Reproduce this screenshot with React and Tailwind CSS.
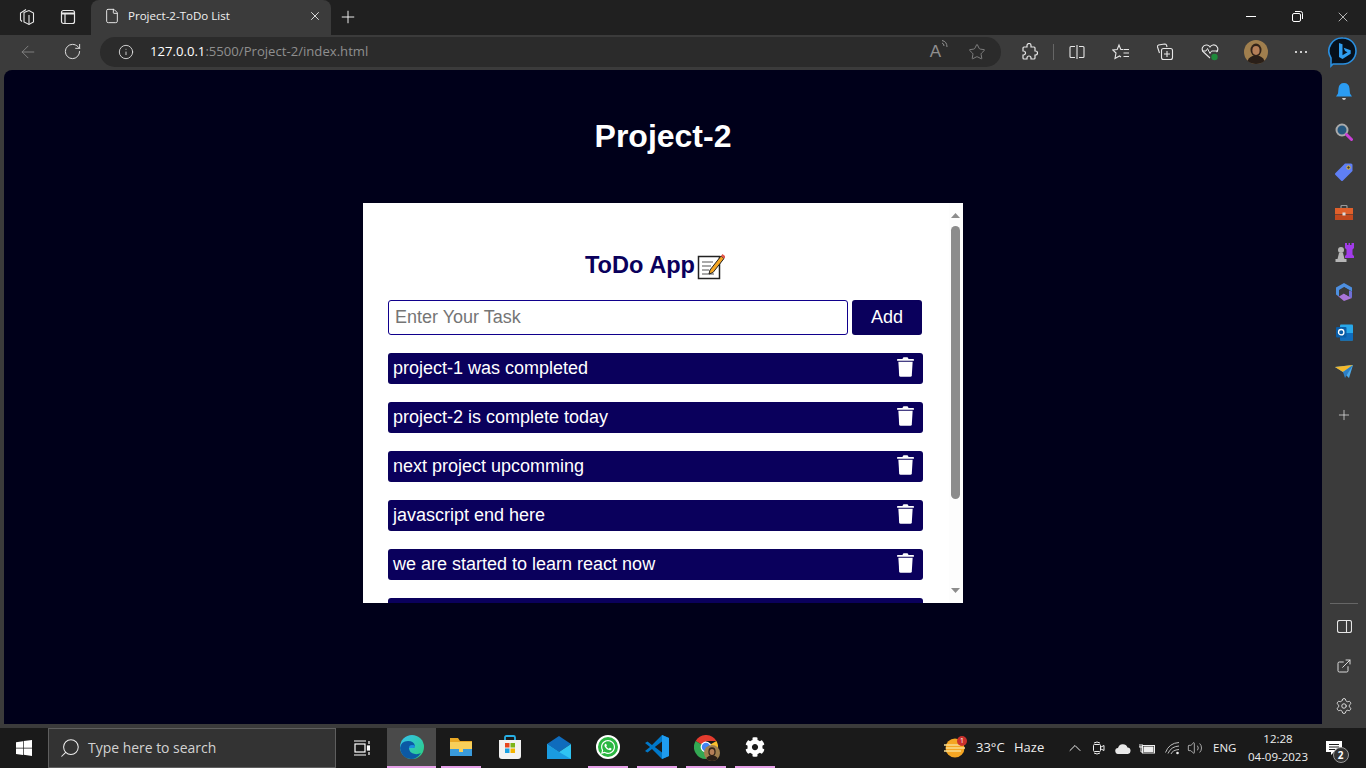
import React from 'react';
import { ArrowLeft, RotateCw, Info, Star, Plus, X, File, ChevronUp, Search, Settings, ExternalLink, Volume2 } from 'lucide-react';
import { FaCog, FaWhatsapp } from 'react-icons/fa';

// the sixth row is cut off by the card, only its top edge shows
const tasks = [
  'project-1 was completed',
  'project-2 is complete today',
  'next project upcomming',
  'javascript end here',
  'we are started to learn react now',
  '',
];

const TrashIcon = () => (
  <svg width="17" height="20" viewBox="0 0 16 19" fill="white" className="mb-[3px]">
    <path d="M5.500 1Q5.700.3 6.500.3h3q.8 0 1 .7l.3.8H15.500q.5 0 .5.5V3.500H0V2.300q0-.5.5-.5h4.700z" />
    <path d="M1.200 4.500h13.600l-.8 13q-.1 1.300-1.400 1.300H3.400q-1.300 0-1.400-1.300z" />
  </svg>
);

const MemoIcon = () => (
  <svg width="28" height="28" viewBox="0 0 28 28">
    <rect x="1.500" y="4.500" width="21" height="22" fill="#fff" stroke="#222" strokeWidth="1.500" />
    <path d="M5 10h11M5 14h9M5 18h7M5 22h12" stroke="#555" strokeWidth="1.200" />
    <path d="M13 18 24 4l3 2.500L16 20.500l-4 1.500z" fill="#f5a623" stroke="#222" strokeWidth="1" />
    <path d="M24 4l1.500-2 3 2.500-1.500 2z" fill="#e2574c" />
  </svg>
);

const Avatar = ({ size = 24 }) => (
  <svg width={size} height={size} viewBox="0 0 24 24">
    <circle cx="12" cy="12" r="12" fill="#a07f4e" />
    <ellipse cx="12" cy="10" rx="5.500" ry="6.500" fill="#33241a" />
    <ellipse cx="12" cy="10.500" rx="3.600" ry="4.400" fill="#b57f58" />
    <path d="M3.500 21q2-5.500 8.500-5.500t8.500 5.500q-3.500 3-8.500 3t-8.500-3z" fill="#2a1f18" />
  </svg>
);

const BingIcon = () => (
  <svg width="30" height="32" viewBox="0 0 30 32">
    <path d="M15 2a13 13 0 0 1 0 26H5l-2 2v-8A13 13 0 0 1 15 2z" fill="#06101c" stroke="#2a8fe0" strokeWidth="1.600" />
    <path d="M11 7l3.500 1.200v11l5-3-2.500-1.200-1.300-3.200 7 2.400v3.600L14.500 23 11 21z" fill="#2f9df0" />
  </svg>
);

const IconBox = ({ w = 'w-[44px]', children }) => (
  <div className={`${w} h-full flex items-center justify-center shrink-0`}>{children}</div>
);

const TabBar = () => (
  <div className="h-[35px] bg-[#202020] flex shrink-0 pb-[2px]">
    <IconBox w="w-[52px]">
      <svg width="18" height="18" viewBox="0 0 18 18" fill="none" stroke="#e8e8e8" strokeWidth="1.100">
        <path d="M7 4.500 12 2.500 16.500 5v9L12 16.500 7 14z" />
        <path d="M5 13.500 3.500 12V5L9 1.500" />
        <path d="M12 7v9.500" />
      </svg>
    </IconBox>
    <IconBox w="w-[32px]">
      <svg width="16" height="16" viewBox="0 0 16 16" fill="none" stroke="#e8e8e8" strokeWidth="1.200">
        <rect x="1.500" y="1.500" width="13" height="13" rx="2" />
        <path d="M1.500 4.500h13" strokeWidth="2" />
        <path d="M5 5v9.500" />
      </svg>
    </IconBox>
    <div className="w-[7px]" />
    <div className="w-[240px] h-[35px] bg-[#3b3b3b] rounded-t-lg flex items-center pl-[13px] pr-[8px] pb-[3px] text-[#f0f0f0]">
      <File size={16} strokeWidth={1.400} />
      <span className="ml-[8px] text-[11.550px] font-['Open_Sans',sans-serif]">Project-2-ToDo List</span>
      <X size={14} strokeWidth={1.500} className="ml-auto mr-[1px]" />
    </div>
    <IconBox w="w-[34px]">
      <Plus size={20} strokeWidth={1.100} color="#ffffff" />
    </IconBox>
    <div className="flex-1" />
    <IconBox w="w-[46px]">
      <div className="w-[10px] h-px bg-white" />
    </IconBox>
    <IconBox w="w-[46px]">
      <svg width="11" height="11" viewBox="0 0 11 11" fill="none" stroke="#fff" strokeWidth="1">
        <rect x="0.500" y="2.500" width="8" height="8" rx="1.500" />
        <path d="M3 .5h5.500q2 0 2 2V8" />
      </svg>
    </IconBox>
    <IconBox w="w-[46px]">
      <X size={16} strokeWidth={1} color="#fff" />
    </IconBox>
  </div>
);

const Toolbar = () => (
  <div className="h-[35px] bg-[#3b3b3b] flex items-center pl-[6px] pb-[2px] shrink-0 text-[#e6e6e6]">
    <IconBox><ArrowLeft size={20} strokeWidth={1} color="#8c8c8c" /></IconBox>
    <IconBox><RotateCw size={19} strokeWidth={1.200} /></IconBox>
    <div className="ml-[6px] w-[901px] h-[30px] rounded-[15px] bg-[#2b2b2b] flex items-center pl-[18px] pr-[15px]">
      <Info size={16} strokeWidth={1.300} />
      <span className="ml-[16px] text-[13.140px] font-['Open_Sans',sans-serif] text-[#8f8f8f]">
        <span className="text-white">127.0.0.1</span>:5500/Project-2/index.html
      </span>
      <span className="ml-auto text-[17px] text-[#8f8f8f] font-['Liberation_Sans',sans-serif] flex items-start">
        A
        <svg width="7" height="9" viewBox="0 0 7 9" fill="none" stroke="#8f8f8f" strokeWidth="1" className="mt-[1px]">
          <path d="M1 3Q3 3.500 3 6M1 .5Q6 1.500 6 7" />
        </svg>
      </span>
      <Star size={18} strokeWidth={1.100} color="#8f8f8f" className="ml-[20px]" />
    </div>
    <div className="w-[6px]" />
    <IconBox>
      <svg width="18" height="18" viewBox="0 0 18 18" fill="none" stroke="#e6e6e6" strokeWidth="1.200">
        <path d="M7 2.500a2 2 0 0 1 4 0V4h3a1 1 0 0 1 1 1v3h.5a2 2 0 0 1 0 4H15v3a1 1 0 0 1-1 1h-3v-1a2 2 0 0 0-4 0v1H4a1 1 0 0 1-1-1v-3h.5a2 2 0 0 0 0-4H3V5a1 1 0 0 1 1-1h3z" />
      </svg>
    </IconBox>
    <div className="w-[4px] flex justify-center"><div className="w-px h-[16px] bg-[#666]" /></div>
    <IconBox>
      <svg width="16" height="16" viewBox="0 0 16 16" fill="none" stroke="#e6e6e6" strokeWidth="1.100">
        <path d="M6 2.500H2a1 1 0 0 0-1 1v9a1 1 0 0 0 1 1h4M10 2.500h4a1 1 0 0 1 1 1v9a1 1 0 0 1-1 1h-4M8 1v14" />
      </svg>
    </IconBox>
    <IconBox>
      <svg width="18" height="18" viewBox="0 0 18 18" fill="none" stroke="#e6e6e6" strokeWidth="1.100">
        <path d="M11 6.500H8.800L7 2 5.200 6.500.8 7 4 10 3 15.500 7.500 13 9 14" />
        <path d="M11.500 6.500H17M11.500 10H17M11.500 13.500H17" />
      </svg>
    </IconBox>
    <IconBox>
      <svg width="18" height="18" viewBox="0 0 18 18" fill="none" stroke="#e6e6e6" strokeWidth="1.100">
        <path d="M3.500 10 1.500 4q-.3-1.500 1-2l6-1q1.500 0 2 1l.5 2" />
        <rect x="5.500" y="5.500" width="11" height="11" rx="2" />
        <path d="M11 8v6M8 11h6" />
      </svg>
    </IconBox>
    <IconBox w="w-[46px]">
      <svg width="18" height="18" viewBox="0 0 18 18" fill="none">
        <path d="M9 15 2.500 9Q.5 7 1.500 4.500 3 1.500 6 2q2 .3 3 2 1-1.700 3-2 3-.5 4.500 2.500 1 2.500-1 4.500" stroke="#e6e6e6" strokeWidth="1.100" />
        <path d="M1 8h4l1.500-2.500L9 10.500 10.500 8H17" stroke="#e6e6e6" strokeWidth="1" />
        <circle cx="13.500" cy="14" r="3.200" fill="#1f8a3b" />
      </svg>
    </IconBox>
    <IconBox w="w-[46px]"><Avatar /></IconBox>
    <IconBox>
      <div className="flex gap-[3px]">
        <div className="w-[2px] h-[2px] bg-white rounded-full" />
        <div className="w-[2px] h-[2px] bg-white rounded-full" />
        <div className="w-[2px] h-[2px] bg-white rounded-full" />
      </div>
    </IconBox>
    <IconBox w="w-[40px]"><BingIcon /></IconBox>
  </div>
);

const TodoCard = () => (
  <div className="w-[600px] h-[400px] bg-white mt-[48px] flex font-['Liberation_Sans',sans-serif]">
    <div className="flex-1 overflow-hidden px-[25px] pt-[49px]">
      <div className="h-[28px] pr-[2px] flex items-center justify-center text-[23.600px] font-bold text-[#0a005c]">
        ToDo App
        <span className="ml-[2px]"><MemoIcon /></span>
      </div>
      <div className="mt-[20px] flex gap-[4px]">
        <input
          readOnly
          placeholder="Enter Your Task"
          className="w-[460px] h-[35px] border border-[#10008c] rounded-[3px] px-[6px] text-[18px] outline-none placeholder:text-[#757575]"
        />
        <button className="w-[70px] h-[35px] rounded-[3px] bg-[#0a005c] text-white text-[18px]">Add</button>
      </div>
      <div className="mt-[18px] flex flex-col gap-[18px] w-[535px]">
        {tasks.map((task, i) => (
          <div key={i} className="h-[31px] shrink-0 rounded-[3px] bg-[#0a005c] flex items-center justify-between pl-[5px] pr-[9px] text-white text-[18px]">
            <span>{task}</span>
            {task && <TrashIcon />}
          </div>
        ))}
      </div>
    </div>
    {/* scrollbar */}
    <div className="w-[14px] bg-[#fdfdfd] flex flex-col pl-[2px] pt-[10px] pb-[10px]">
      <svg width="9" height="5" viewBox="0 0 9 5" className="shrink-0"><path d="M4.500 0 9 5H0z" fill="#8c8c8c" /></svg>
      <div className="mt-[8px] w-[9px] h-[273px] rounded-full bg-[#8c8c8c]" />
      <svg width="9" height="5" viewBox="0 0 9 5" className="mt-auto shrink-0"><path d="M4.500 5 9 0H0z" fill="#8c8c8c" /></svg>
    </div>
  </div>
);

const SideBar = () => (
  <div className="w-[44px] shrink-0 flex flex-col justify-between text-[#e6e6e6]">
    <div className="flex flex-col items-center pt-[2px]">
      <div className="h-10 flex items-center">
        <svg width="16" height="18" viewBox="0 0 16 18">
          <path d="M8 0q5 0 5.500 5.500l.5 5 2 3H0l2-3 .5-5Q3 0 8 0z" fill="#2b9cf2" />
          <path d="M6 15h4q-.5 2-2 2t-2-2z" fill="#ccc" />
        </svg>
      </div>
      <div className="h-10 flex items-center">
        <svg width="18" height="18" viewBox="0 0 18 18">
          <circle cx="7" cy="7" r="5.500" fill="#26587f" stroke="#aaa" strokeWidth="2" />
          <path d="M11.500 11.500 16.500 16.500" stroke="#c93fd6" strokeWidth="3" strokeLinecap="round" />
        </svg>
      </div>
      <div className="h-10 flex items-center">
        <svg width="18" height="18" viewBox="0 0 18 18">
          <path d="M10 .5h6q1.500 0 1.500 1.500v6L8 17.500q-1 1-2 0L.5 12q-1-1 0-2z" fill="#5f7ff5" />
          <circle cx="13.500" cy="4.500" r="1.700" fill="#3b3b3b" stroke="#f2c230" strokeWidth="1" />
        </svg>
      </div>
      <div className="h-10 flex items-center">
        <svg width="18" height="15" viewBox="0 0 18 15">
          <path d="M6 3V1.500q0-1 1-1h4q1 0 1 1V3" fill="none" stroke="#999" strokeWidth="1.200" />
          <rect y="3" width="18" height="6" fill="#e0602b" />
          <rect y="9.500" width="18" height="5.500" fill="#c2491e" />
          <rect x="7.500" y="7.500" width="3" height="3" fill="#ddd" />
        </svg>
      </div>
      <div className="h-10 flex items-center">
        <svg width="19" height="19" viewBox="0 0 19 19">
          <circle cx="6" cy="7" r="3" fill="#b5b5b5" />
          <path d="M4 10h4l1.500 6H2.500z" fill="#b5b5b5" />
          <rect x="0.500" y="16" width="11" height="3" fill="#b5b5b5" />
          <path d="M10 0h2v2h1.500V0h1.500v2h1.500V0H19v5l-1.500 1.500v5l1.500 1.500v2h-9v-2l1.500-1.500v-5L10 5z" fill="#a23bea" />
        </svg>
      </div>
      <div className="h-10 flex items-center">
        <svg width="18" height="18" viewBox="0 0 18 18">
          <path d="M9 0 17 4.500v4L9 4 4 7v6.500L1 11.500v-7z" fill="#4d8fe0" />
          <path d="M1 11.500 4 13.500 9 10.500l8 4.500-8 3z" fill="#a874d8" />
          <path d="M17 8.500V15l-3-1.500v-6z" fill="#6f6fd8" />
          <path d="M9 4 14 7v6.500L9 10.500z" fill="#3b3b3b" />
        </svg>
      </div>
      <div className="h-10 flex items-center">
        <svg width="17" height="17" viewBox="0 0 17 17">
          <rect x="4" y="0.500" width="13" height="16" rx="1" fill="#28a8ea" />
          <path d="M4 9h13v7.500H4z" fill="#0f6cbd" />
          <rect y="3" width="10.500" height="10.500" rx="1" fill="#0a5ea8" />
          <circle cx="5.200" cy="8.200" r="2.700" fill="none" stroke="#fff" strokeWidth="1.300" />
        </svg>
      </div>
      <div className="h-10 flex items-center">
        <svg width="18" height="14" viewBox="0 0 18 14">
          <path d="M0 2 18 0 14 13 8 7z" fill="#4ba9e8" />
          <path d="M0 2 18 0 8 7z" fill="#f3b82c" />
          <path d="M8 7 18 0 10 13z" fill="#2d7fc4" />
        </svg>
      </div>
      <div className="h-10 flex items-center mt-[3px]">
        <Plus size={16} strokeWidth={1.100} />
      </div>
    </div>
    <div className="flex flex-col items-center mb-[2px]">
      <div className="w-[28px] h-px bg-[#666] mb-[2px]" />
      <div className="h-10 flex items-center">
        <svg width="15" height="13" viewBox="0 0 15 13" fill="none" stroke="#e6e6e6" strokeWidth="1.100">
          <rect x="0.500" y="0.500" width="14" height="12" rx="2" />
          <path d="M9.500 .5v12" />
        </svg>
      </div>
      <div className="h-10 flex items-center"><ExternalLink size={16} strokeWidth={1.400} /></div>
      <div className="h-10 flex items-center"><Settings size={18} strokeWidth={1.200} /></div>
    </div>
  </div>
);

const WindowsLogo = () => (
  <svg width="16" height="16" viewBox="0 0 16 16" fill="#fff">
    <path d="M0 2.200 7 1.200v6.500H0zM7.700 1.100 16 0v7.700H7.700zM0 8.400h7v6.500l-7-1zM7.700 8.400H16V16l-8.300-1.200z" />
  </svg>
);

const EdgeLogo = () => (
  <svg width="24" height="24" viewBox="0 0 24 24">
    <defs>
      <linearGradient id="edgeA" x1="0" y1="0" x2="1" y2="1">
        <stop offset="0" stopColor="#35c1f1" />
        <stop offset="1" stopColor="#2bd07a" />
      </linearGradient>
    </defs>
    <circle cx="12" cy="12" r="12" fill="url(#edgeA)" />
    <path d="M0 13Q1 6 8 6q6 0 7 5 0 2-3 2H9q0 5 6 6 3 .5 6-1-4 6-10 6Q1 23 0 13z" fill="#0c59a4" />
    <path d="M9 13q0-3 3-3t3 1q0 2-3 2z" fill="#1a8fe0" />
  </svg>
);

const FolderLogo = () => (
  <svg width="24" height="22" viewBox="0 0 24 22">
    <path d="M1 2h8l2 3h12v15H1z" fill="#e9a825" />
    <path d="M1 6h22v14H1z" fill="#f8cf5a" />
    <path d="M1 13h9v3h4v-3h9v7H1z" fill="#3a9bdc" />
  </svg>
);

const StoreLogo = () => (
  <svg width="24" height="24" viewBox="0 0 24 24">
    <path d="M7 6V2.500Q7 1 8.500 1h7Q17 1 17 2.500V6" fill="none" stroke="#27b0e6" strokeWidth="1.800" />
    <path d="M1 5h22v16q0 3-3 3H4q-3 0-3-3z" fill="#f2f2f2" />
    <rect x="7" y="8" width="4.500" height="4.500" fill="#e8471f" />
    <rect x="12.500" y="8" width="4.500" height="4.500" fill="#7cb518" />
    <rect x="7" y="13.500" width="4.500" height="4.500" fill="#1ba1e2" />
    <rect x="12.500" y="13.500" width="4.500" height="4.500" fill="#f4b400" />
  </svg>
);

const MailLogo = () => (
  <svg width="24" height="23" viewBox="0 0 24 23">
    <path d="M0 8 12 0l12 8-12 8z" fill="#0f6cbd" />
    <path d="M0 8l12 8 12-8v15H0z" fill="#2fc4f2" />
    <path d="M0 23V8l12 8 12 7z" fill="#1a9be0" />
  </svg>
);

const VSCodeLogo = () => (
  <svg width="24" height="24" viewBox="0 0 24 24">
    <path d="M17 0 7 10 2.500 6.500 0 8l5 4-5 4 2.500 1.500L7 14l10 10 7-3V3z" fill="#0078c9" />
    <path d="M17 0l7 3v18l-7 3z" fill="#1f9cf0" />
    <path d="M17 6.500 9.800 12l7.200 5.500z" fill="#1a1a1a" />
  </svg>
);

const ChromeLogo = () => (
  <div className="relative w-[24px] h-[24px]">
    <svg width="24" height="24" viewBox="0 0 24 24">
      <path d="M12 12 1.600 6A12 12 0 0 1 22.400 6H12z" fill="#e33b2e" />
      <path d="M12 12 22.400 6A12 12 0 0 1 12 24z" fill="#fbc02d" />
      <path d="M12 12 12 24A12 12 0 0 1 1.600 6z" fill="#34a853" />
      <circle cx="12" cy="12" r="5.400" fill="#fff" />
      <circle cx="12" cy="12" r="4.200" fill="#4285f4" />
    </svg>
    <div className="absolute left-[10px] top-[10px]"><Avatar size={16} /></div>
  </div>
);

const apps = [
  { id: 'edge', icon: <EdgeLogo />, bar: true, active: true },
  { id: 'files', icon: <FolderLogo />, bar: true },
  { id: 'store', icon: <StoreLogo /> },
  { id: 'mail', icon: <MailLogo /> },
  {
    id: 'whatsapp',
    icon: (
      <div className="w-[24px] h-[24px] flex items-center justify-center rounded-full bg-[#2bb741] border-2 border-white">
        <FaWhatsapp size={16} color="#fff" />
      </div>
    ),
    bar: true,
  },
  { id: 'vscode', icon: <VSCodeLogo />, bar: true },
  { id: 'chrome', icon: <ChromeLogo />, bar: true },
  { id: 'settings', icon: <FaCog size={20} color="#fff" />, bar: true },
];

const TaskBar = () => (
  <div className="h-10 bg-[#1a1a1a] flex shrink-0 text-[#eeeeee] font-['Open_Sans',sans-serif]">
    <IconBox w="w-[48px]"><WindowsLogo /></IconBox>
    <div className="w-[288px] border border-[#5e5e5e] bg-[#333333] flex items-center pl-[10px]">
      <Search size={22} strokeWidth={1.100} className="-scale-x-100" />
      <span className="ml-[7px] text-[13.950px] text-[#d2d2d2]">Type here to search</span>
    </div>
    <IconBox w="w-[51px]">
      <svg width="16" height="16" viewBox="0 0 16 16" fill="none" stroke="#fff" strokeWidth="1.200">
        <rect x="1" y="4" width="10" height="8" />
        <path d="M0 1h12M0 15h12M15 1v3M15 12v3" />
        <rect x="13.500" y="6" width="2.500" height="4" fill="#fff" />
      </svg>
    </IconBox>
    {apps.map(app => (
      <div
        key={app.id}
        className={`w-[49px] flex flex-col items-center shrink-0 ${app.active ? 'bg-[#4a4a4a]' : ''}`}
      >
        <div className="flex-1 flex items-center justify-center">{app.icon}</div>
        <div className={`h-[2px] ${app.active ? 'w-full' : 'w-[40px]'} ${app.bar ? 'bg-[#e5a0e8]' : ''}`} />
      </div>
    ))}
    <div className="flex-1" />
    <IconBox w="w-[30px]">
      <div className="relative">
        <svg width="22" height="20" viewBox="0 0 22 20">
          <circle cx="11" cy="10" r="9.500" fill="#f5a623" />
          <path d="M0 7h16M2 10h19M0 13h17" stroke="#f7dc8f" strokeWidth="1.500" />
        </svg>
        <div className="absolute -right-[1px] -top-[2px] w-[10px] h-[10px] rounded-full bg-[#c9302c] text-white text-[7px] leading-[10px] text-center">1</div>
      </div>
    </IconBox>
    <span className="ml-[6px] w-[38px] self-center text-[13px]">33°C</span>
    <span className="w-[47px] self-center text-[13px]">Haze</span>
    <IconBox w="w-[28px]"><ChevronUp size={20} strokeWidth={1.200} /></IconBox>
    <IconBox w="w-[20px]">
      <svg width="12" height="16" viewBox="0 0 12 16" fill="none" stroke="#eee" strokeWidth="1">
        <path d="M1 3q3-2 6 0M1 13q3 2 6 0" />
        <rect x="0.500" y="4.500" width="7" height="7" rx="1" />
        <path d="M8 7l3-1.500v5L8 9" />
      </svg>
    </IconBox>
    <IconBox w="w-[28px]">
      <svg width="16" height="11" viewBox="0 0 16 11" fill="#e8e8e8">
        <path d="M3.500 11a3 3 0 0 1-.5-6 5 5 0 0 1 9.500-.5A3.300 3.300 0 0 1 13 11z" />
      </svg>
    </IconBox>
    <IconBox w="w-[20px]">
      <svg width="16" height="11" viewBox="0 0 16 11" fill="none" stroke="#eee" strokeWidth="1">
        <rect x="3.500" y="2.500" width="12" height="7.500" />
        <rect x="5" y="4" width="9" height="4.500" fill="#eee" />
        <path d="M1 1v3M3 1v3M0 4h4M2 4v5h2" />
      </svg>
    </IconBox>
    <IconBox w="w-[30px]">
      <svg width="15" height="13" viewBox="0 0 15 13" fill="none" stroke="#bdbdbd" strokeWidth="1">
        <path d="M.5 10.500Q4 1 14 .5M3 11.500Q6 4.500 14 4M6 12q1.500-4 8-4.500" />
        <circle cx="12.500" cy="11" r="1.300" fill="#eee" stroke="none" />
      </svg>
    </IconBox>
    <IconBox w="w-[16px]"><Volume2 size={16} strokeWidth={1} /></IconBox>
    <span className="ml-[10px] w-[26px] self-center text-[11.500px]">ENG</span>
    <div className="w-[78px] flex flex-col items-center justify-center text-[11.500px] leading-[18px]">
      <span>12:28</span>
      <span>04-09-2023</span>
    </div>
    <IconBox w="w-[33px]">
      <div className="relative">
        <svg width="16" height="14" viewBox="0 0 16 14" fill="#fff">
          <path d="M0 0h16v11H8l-3 3v-3H0z" />
          <path d="M3 3.500h10M3 6h10M3 8.500h6" stroke="#1a1a1a" strokeWidth="1" />
        </svg>
        <div className="absolute left-[7px] top-[6px] w-[16px] h-[16px] rounded-full bg-[#333] border border-[#999] text-white text-[10px] font-bold leading-[14px] text-center">2</div>
      </div>
    </IconBox>
    <div className="w-[16px]" />
  </div>
);

export default function App() {
  return (
    <div className="h-screen overflow-hidden flex flex-col bg-[#3b3b3b]">
      <TabBar />
      <Toolbar />
      <div className="flex-1 min-h-0 flex">
        <div className="ml-[4px] mb-[4px] flex-1 rounded-t-lg bg-[#00001a] flex flex-col items-center">
          <h1 className="mt-[48px] text-[32px] leading-[37px] font-bold text-white font-['Liberation_Sans',sans-serif]">Project-2</h1>
          <TodoCard />
        </div>
        <SideBar />
      </div>
      <TaskBar />
    </div>
  );
}
